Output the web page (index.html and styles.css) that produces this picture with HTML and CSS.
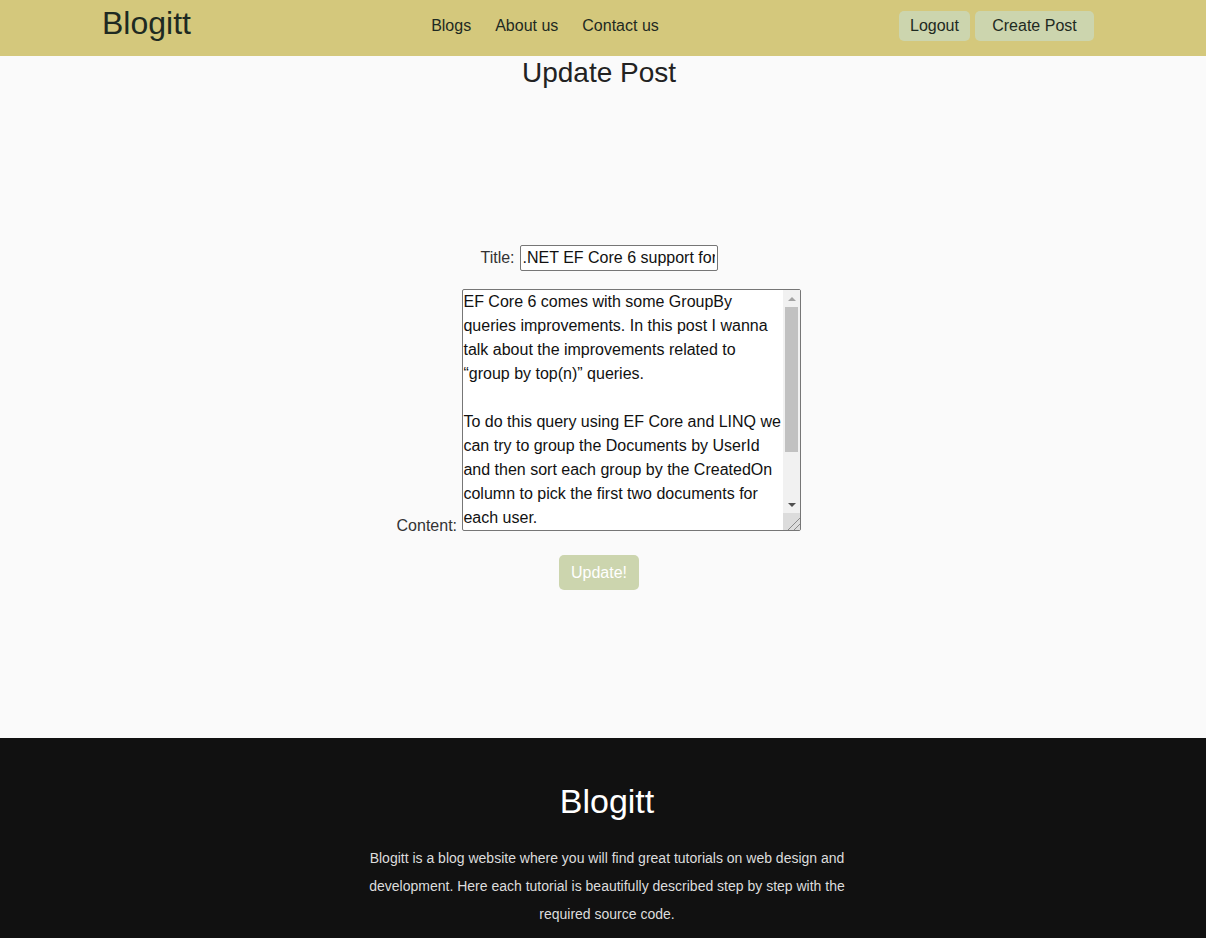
FILE: index.html
```html
<!DOCTYPE html>
<html lang="en">
<head>
<meta charset="utf-8">
<title>Blogitt - Update Post</title>
<link rel="stylesheet" href="styles.css">
</head>
<body>
<header class="topbar">
  <a class="logo" href="#">Blogitt</a>
  <nav class="nav">
    <a href="#">Blogs</a>
    <a href="#">About us</a>
    <a href="#">Contact us</a>
  </nav>
  <div class="actions">
    <button class="btn btn-logout">Logout</button>
    <button class="btn btn-create">Create Post</button>
  </div>
</header>

<main class="main">
  <h1 class="page-title">Update Post</h1>
  <form class="post-form">
    <div class="row-title">
      <label for="title">Title:</label>
      <input id="title" class="title-input" type="text" value=".NET EF Core 6 support for groupBy top(n) queries">
    </div>
    <div class="row-content">
      <label for="content">Content:</label>
      <span class="ta-wrap">
        <textarea id="content" class="content-input">EF Core 6 comes with some GroupBy queries improvements. In this post I wanna talk about the improvements related to “group by top(n)” queries.

To do this query using EF Core and LINQ we can try to group the Documents by UserId and then sort each group by the CreatedOn column to pick the first two documents for each user.

In EF Core 5 this query throws an exception, but EF Core 6 translates it to SQL.</textarea>
        <span class="sb" aria-hidden="true">
          <span class="sb-btn"><span class="arrow-up"></span></span>
          <span class="sb-track"><span class="sb-thumb"></span></span>
          <span class="sb-btn"><span class="arrow-down"></span></span>
          <span class="sb-corner"></span>
        </span>
      </span>
    </div>
    <button type="button" class="btn-update">Update!</button>
  </form>
</main>

<footer class="footer">
  <h2 class="footer-logo">Blogitt</h2>
  <p class="footer-text">Blogitt is a blog website where you will find great tutorials on web design and development. Here each tutorial is beautifully described step by step with the required source code.</p>
</footer>
</body>
</html>
```

FILE: styles.css
```css
* { box-sizing: border-box; }

html, body {
  margin: 0;
  padding: 0;
}

body {
  background: #fafafa;
  font-family: "Liberation Sans", Arial, sans-serif;
  color: #222;
}

.topbar {
  height: 56px;
  background: #d4c87c;
  display: flex;
  align-items: center;
  justify-content: space-between;
  padding: 0 112px 0 102px;
}

.logo {
  font-size: 32px;
  color: #1e2a22;
  text-decoration: none;
  line-height: 1;
  margin-top: -10px;
}

.nav {
  display: flex;
  gap: 24px;
  margin-top: -4px;
}

.nav a {
  font-size: 16px;
  color: #1e2a22;
  text-decoration: none;
}

.actions {
  display: flex;
  gap: 5px;
  margin-top: -4px;
}

.btn {
  height: 30px;
  padding: 0;
  border: none;
  border-radius: 5px;
  background: #ccd5ae;
  color: #1e2a22;
  font-family: "Liberation Sans", Arial, sans-serif;
  font-size: 16px;
  cursor: pointer;
}

.btn-logout { width: 71px; }
.btn-create { width: 119px; }

.main {
  height: 681px;
  padding-right: 8px;
  text-align: center;
}

.page-title {
  margin: 1px 0 0;
  font-size: 28px;
  font-weight: normal;
  color: #222;
}

.post-form {
  margin-top: 156px;
  display: flex;
  flex-direction: column;
  align-items: center;
}

.row-title {
  display: flex;
  align-items: center;
  gap: 5px;
  font-size: 16px;
  color: #333;
}

.title-input {
  width: 198px;
  height: 26px;
  padding: 1px 2px;
  border: 1px solid #767676;
  border-radius: 2px;
  font-family: "Liberation Sans", Arial, sans-serif;
  font-size: 16px;
  color: #111;
  background: #fff;
}

.row-content {
  margin-top: 18px;
  font-size: 16px;
  color: #333;
  line-height: 18px;
}

.row-content label {
  margin-right: 1px;
}

.ta-wrap {
  display: inline-block;
  position: relative;
}

.content-input {
  display: block;
  width: 339px;
  height: 242px;
  padding: 0 17px 0 0;
  border: 1px solid #767676;
  border-radius: 2px;
  font-family: "Liberation Sans", Arial, sans-serif;
  font-size: 16px;
  line-height: 24px;
  color: #111;
  background: #fff;
  resize: none;
  overflow: hidden;
  text-align: left;
}

/* decorative scrollbar drawn over the textarea edge */
.sb {
  position: absolute;
  top: 1px;
  right: 1px;
  width: 17px;
  height: 240px;
  display: flex;
  flex-direction: column;
  background: #f1f1f1;
  pointer-events: none;
}

.sb-btn {
  height: 17px;
  display: flex;
  align-items: center;
  justify-content: center;
  flex: none;
}

.arrow-up {
  width: 0;
  height: 0;
  border-left: 4px solid transparent;
  border-right: 4px solid transparent;
  border-bottom: 4px solid #a3a3a3;
}

.arrow-down {
  width: 0;
  height: 0;
  border-left: 4px solid transparent;
  border-right: 4px solid transparent;
  border-top: 4px solid #505050;
}

.sb-track {
  flex: 1;
  padding: 0 2px;
}

.sb-thumb {
  display: block;
  height: 145px;
  background: #c1c1c1;
}

.sb-corner {
  height: 17px;
  flex: none;
  background:
    linear-gradient(135deg, transparent 62%, #8a8a8a 62%, #8a8a8a 67%, transparent 67%, transparent 80%, #8a8a8a 80%, #8a8a8a 85%, transparent 85%),
    #dcdcdc;
}

.btn-update {
  margin-top: 20px;
  height: 35px;
  padding: 0 12px;
  border: none;
  border-radius: 5px;
  background: #ccd5ae;
  color: #fff;
  font-family: "Liberation Sans", Arial, sans-serif;
  font-size: 16px;
}

.footer {
  background: #111;
  min-height: 200px;
  padding: 44px 0 0 8px;
  text-align: center;
}

.footer-logo {
  margin: 0;
  font-size: 34px;
  font-weight: normal;
  color: #fff;
}

.footer-text {
  width: 500px;
  margin: 23px auto 0;
  font-size: 14px;
  line-height: 28px;
  color: #ddd;
}
```
